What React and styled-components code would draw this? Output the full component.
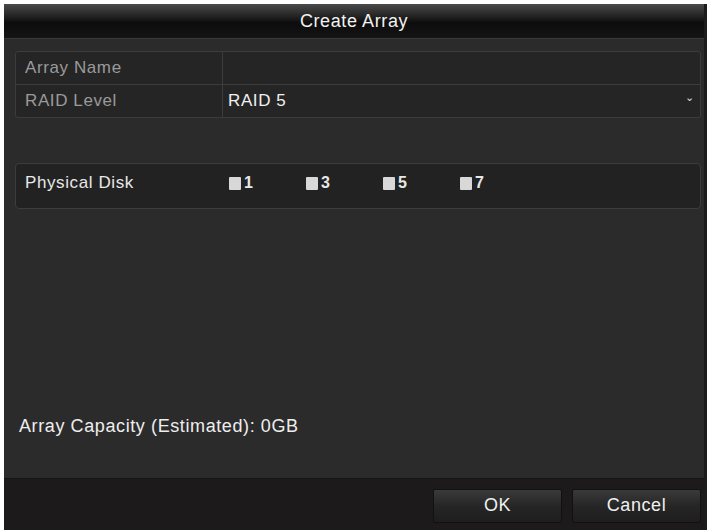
import React from 'react';
import styled, { createGlobalStyle } from 'styled-components';

const GlobalStyle = createGlobalStyle`
    html, body {
        margin: 0;
        padding: 0;
        background: #fff;
    }
    body {
        font-family: "Liberation Sans", Arial, sans-serif;
        letter-spacing: 0.6px;
    }
`;

const disks = [1, 3, 5, 7];

const App = () => {
    return (
        <Page>
            <GlobalStyle />
            <Dialog>
                <TitleBar>Create Array</TitleBar>
                <Body>
                    <FieldTable>
                        <FieldRow>
                            <FieldLabel>Array Name</FieldLabel>
                            <FieldValue />
                        </FieldRow>
                        <FieldRow last>
                            <FieldLabel>RAID Level</FieldLabel>
                            <FieldValue>
                                RAID 5
                                <Caret>&#8964;</Caret>
                            </FieldValue>
                        </FieldRow>
                    </FieldTable>
                    <DiskPanel>
                        <DiskLabel>Physical Disk</DiskLabel>
                        <DiskList>
                            {disks.map((d) => (
                                <DiskItem key={d}>
                                    <Check />
                                    {d}
                                </DiskItem>
                            ))}
                        </DiskList>
                    </DiskPanel>
                    <Capacity>Array Capacity (Estimated): 0GB</Capacity>
                </Body>
                <Footer>
                    <Button>OK</Button>
                    <Button>Cancel</Button>
                </Footer>
            </Dialog>
        </Page>
    );
};

export default App;

const Page = styled.div`
    width: 712px;
    height: 532px;
    padding: 4px 5px 2px 4px;
    box-sizing: border-box;
    background: #fff;
`;

const Dialog = styled.div`
    height: 100%;
    display: flex;
    flex-direction: column;
    background: #2b2b2b;
    border-right: 3px solid #1c1c1c;
    box-sizing: border-box;
`;

const TitleBar = styled.div`
    height: 34px;
    display: flex;
    align-items: center;
    justify-content: center;
    color: #f2f2f2;
    font-size: 18px;
    background: linear-gradient(#4a4a4a 0%, #2a2a2a 30%, #0d0d0d 55%, #141414 100%);
    border-bottom: 1px solid #3a3a3a;
`;

const Body = styled.div`
    flex: 1;
    display: flex;
    flex-direction: column;
    padding: 12px 3px 0 11px;
`;

const FieldTable = styled.div`
    border: 1px solid #3c3c3c;
    border-radius: 3px;
    background: #252525;
`;

const FieldRow = styled.div`
    height: 32px;
    display: grid;
    grid-template-columns: 207px 1fr;
    border-bottom: ${(p) => (p.last ? 'none' : '1px solid #3c3c3c')};
`;

const FieldLabel = styled.div`
    display: flex;
    align-items: center;
    padding-left: 9px;
    color: #9a9a9a;
    font-size: 17px;
    border-right: 1px solid #3c3c3c;
`;

const FieldValue = styled.div`
    position: relative;
    display: flex;
    align-items: center;
    padding-left: 5px;
    color: #f0f0f0;
    font-size: 17px;
`;

const Caret = styled.span`
    position: absolute;
    right: 5px;
    top: 6px;
    font-size: 11px;
    color: #ddd;
`;

const DiskPanel = styled.div`
    margin-top: 45px;
    height: 46px;
    padding-bottom: 6px;
    box-sizing: border-box;
    display: flex;
    align-items: center;
    border: 1px solid #3c3c3c;
    border-radius: 4px;
    background: #222;
`;

const DiskLabel = styled.div`
    width: 204px;
    padding-left: 9px;
    color: #e8e8e8;
    font-size: 17px;
`;

const DiskList = styled.div`
    display: flex;
`;

const DiskItem = styled.div`
    width: 77px;
    display: flex;
    align-items: center;
    gap: 3px;
    color: #e8e8e8;
    font-size: 16px;
    font-weight: bold;
`;

const Check = styled.span`
    width: 12px;
    height: 13px;
    background: #d8d8d8;
    border-radius: 1px;
`;

const Capacity = styled.div`
    margin-top: auto;
    margin-bottom: 41px;
    margin-left: 4px;
    color: #eee;
    font-size: 18px;
`;

const Footer = styled.div`
    height: 52px;
    display: flex;
    align-items: center;
    justify-content: flex-end;
    gap: 10px;
    padding: 2px 3px 0 0;
    box-sizing: border-box;
    background: #1c1a1a;
    border-top: 1px solid #141414;
`;

const Button = styled.button`
    width: 129px;
    height: 34px;
    border: 1px solid #111;
    border-radius: 2px;
    background: linear-gradient(#3a3a3a 0%, #262626 50%, #1e1e1e 100%);
    color: #f0f0f0;
    font-family: "Liberation Sans", Arial, sans-serif;
    font-size: 18px;
    letter-spacing: 0.6px;
`;
